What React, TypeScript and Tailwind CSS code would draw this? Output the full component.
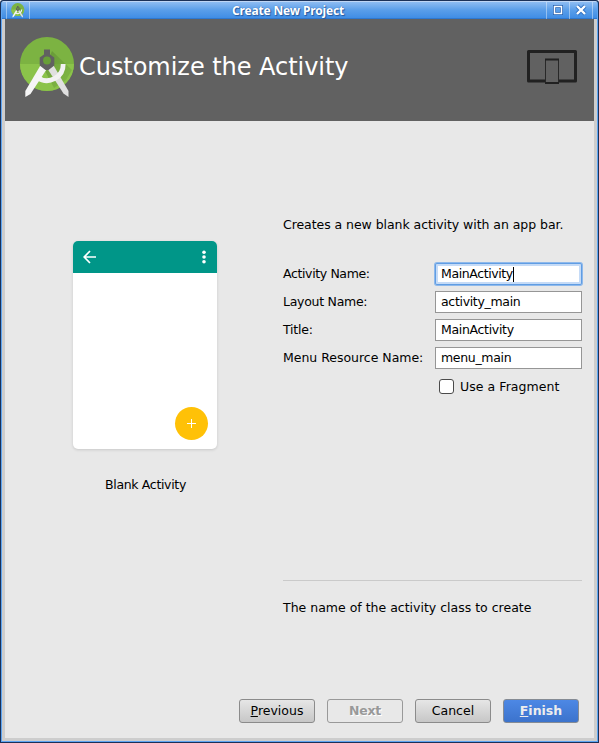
import React from "react";

function StudioLogo({ className }: { className: string }) {
  return (
    <svg className={className} viewBox="0 0 56 62">
      <defs>
        <linearGradient id="shade" x1="0" y1="0" x2="1" y2="1">
          <stop offset="0" stopColor="#57862f" />
          <stop offset="1" stopColor="#7cb342" />
        </linearGradient>
        <clipPath id="disc">
          <circle cx="27" cy="27" r="27" />
        </clipPath>
      </defs>
      <circle cx="27" cy="27" r="27" fill="#7cb342" />
      <path d="M0 27a27 27 0 0 0 54 0z" fill="#8bc34a" />
      <path d="M32 14L52 33L46 43L34 51L24 32z" fill="url(#shade)" opacity="0.6" clipPath="url(#disc)" />
      <path d="M27 31L33 27.500L48.500 54V60L43.500 56.500z" fill="#e0e0e0" />
      <path d="M17.500 40.500A16.200 16.200 0 0 0 43.200 27" fill="none" stroke="#f2f2f2" strokeWidth="4.800" />
      <path d="M21 27.500L27.500 31L10.500 57L5.300 60V54z" fill="#f5f5f5" />
      <path d="M24 12.500h6v5l4.300 3v8L28.500 33h-3L19.700 28.500v-8l4.300-3z" fill="#616161" />
      <circle cx="27" cy="23.500" r="3.900" fill="#689f38" />
    </svg>
  );
}

function Separator() {
  return <i className="h-[17px] w-px bg-white/40" />;
}

function TitleBar() {
  return (
    <header className="flex h-[18px] shrink-0 items-center border-t border-[#bfd6f5] border-b border-b-[#2f78cf] bg-gradient-to-b from-[#8dbcf2] via-[#5a9ee9] to-[#3f8de5]">
      <span className="w-[4px]" />
      <Separator />
      <div className="flex w-[22px] justify-center">
        <StudioLogo className="h-[15px] w-[14px]" />
      </div>
      <Separator />
      <h1 className="flex-1 whitespace-nowrap pt-[2px] text-center font-['Noto_Sans',sans-serif] text-[12px] leading-4 font-bold tracking-[-0.17px] text-white [text-shadow:0_0_1px_#245aa0,1px_1px_1px_#245aa0]">
        Create New Project
      </h1>
      <Separator />
      <div className="flex w-[22px] justify-center">
        <svg className="h-[12px] w-[12px]" viewBox="0 0 12 12">
          <path d="M2.500 2.500h7v7h-7z" fill="none" stroke="#245fae" strokeWidth="3" />
          <path d="M2.500 2.500h7v7h-7z" fill="none" stroke="white" strokeWidth="1.500" />
        </svg>
      </div>
      <Separator />
      <div className="flex w-[22px] justify-center">
        <svg className="h-[12px] w-[12px]" viewBox="0 0 12 12">
          <path d="M2 2l8 8M10 2l-8 8" stroke="#2f6fc0" strokeWidth="4" />
          <path d="M2 2l8 8M10 2l-8 8" stroke="white" strokeWidth="2.400" />
        </svg>
      </div>
      <Separator />
      <span className="w-[4px]" />
    </header>
  );
}

function Banner() {
  return (
    <div className="flex h-[102px] shrink-0 items-center bg-[#616161] pr-[17px] pl-[15px]">
      <StudioLogo className="mt-[-4px] h-[62px] w-[56px]" />
      <h2 className="ml-[3px] flex-1 pb-[6px] text-[24px] leading-8 tracking-[-0.04px] whitespace-nowrap text-white">
        Customize the Activity
      </h2>
      <svg className="mb-[5px] h-[35px] w-[50px]" viewBox="0 0 50 35">
        <path d="M1.500 1.500h47v29.500h-47z" fill="none" stroke="#212121" strokeWidth="3" strokeLinejoin="round" />
        <path d="M18.500 9.500h13v23h-13z" fill="#616161" stroke="#282828" />
        <path d="M18 9.500h14M18 33h14" stroke="#212121" strokeWidth="2" />
      </svg>
    </div>
  );
}

function Preview() {
  return (
    <div className="flex w-[144px] flex-col items-center">
      <div className="flex h-[208px] w-full flex-col overflow-hidden rounded-[5px] bg-white shadow-[0_1px_3px_rgba(0,0,0,0.14)]">
        <div className="flex h-8 items-center justify-between bg-[#009688] pr-[11px] pl-[10px]">
          <svg className="h-[14px] w-[14px]" viewBox="0 0 14 14" fill="none" stroke="white" strokeWidth="1.700">
            <path d="M13 7H1.500M7 1L1.200 7L7 13" />
          </svg>
          <svg className="h-[14px] w-[4px]" viewBox="0 0 4 14" fill="white">
            <circle cx="2" cy="2.300" r="1.800" />
            <circle cx="2" cy="7" r="1.800" />
            <circle cx="2" cy="11.700" r="1.800" />
          </svg>
        </div>
        <div className="flex flex-1 items-end justify-end pr-[9px] pb-[9px]">
          <div className="flex h-[33px] w-[33px] items-center justify-center rounded-full bg-[#ffc107]">
            <svg className="h-[9px] w-[9px]" viewBox="0 0 9 9" stroke="white">
              <path d="M0 4.500h9M4.500 0v9" />
            </svg>
          </div>
        </div>
      </div>
      <p className="mt-[28px] pl-px leading-4 tracking-[-0.33px]">Blank Activity</p>
    </div>
  );
}

interface FieldProps {
  label: string;
  value: string;
  labelClass?: string;
  focused?: boolean;
}

function Field({ label, value, labelClass = "", focused = false }: FieldProps) {
  return (
    <div className="flex h-[22px] items-center">
      <label className={`w-[152px] whitespace-nowrap ${labelClass}`}>{label}</label>
      <div
        className={
          focused
            ? "flex h-[22px] w-[147px] items-center rounded-[2px] border border-[#609de3] bg-white pl-[5px] tracking-[-0.4px] ring-1 ring-[#8fb9eb] inset-ring-2 inset-ring-[#c5dbf7]"
            : "flex h-[22px] w-[147px] items-center border border-[#969696] bg-white pl-[5px] tracking-[-0.32px]"
        }
      >
        {value}
        {focused && <i className="h-[15px] w-px bg-black" />}
      </div>
    </div>
  );
}

function PushButton({ children, className = "" }: { children: React.ReactNode; className?: string }) {
  return (
    <button className={`h-[24px] w-[76px] rounded-[3px] border pb-px leading-[21px] ${className}`}>{children}</button>
  );
}

const raised = "border-[#8b8b8b] bg-gradient-to-b from-[#e6e6e6] to-[#c7c7c7]";

export default function App() {
  return (
    <div className="h-[743px] w-[599px] rounded-t-[3px] bg-[#1b3158] p-px font-['DejaVu_Sans',sans-serif] text-[12.500px] text-black">
      <div className="flex h-full flex-col overflow-hidden rounded-t-[3px] border-x border-b border-[#5ea5f2] bg-[#cdcdcd]">
        <TitleBar />
        <main className="mx-[3px] mb-[3px] flex flex-1 flex-col bg-[#e8e8e8]">
          <Banner />
          <div className="flex flex-1 pl-[68px]">
            <div className="pt-[120px]">
              <Preview />
            </div>
            <section className="ml-[66px] flex w-[299px] flex-col pt-[96px]">
              <p className="leading-4 tracking-[-0.055px] whitespace-nowrap">Creates a new blank activity with an app bar.</p>
              <form className="mt-[30px] flex flex-col gap-[6px]">
                <Field label="Activity Name:" value="MainActivity" labelClass="tracking-[-0.37px]" focused />
                <Field label="Layout Name:" value="activity_main" labelClass="tracking-[-0.27px]" />
                <Field label="Title:" value="MainActivity" labelClass="tracking-[-0.2px]" />
                <Field label="Menu Resource Name:" value="menu_main" labelClass="tracking-[-0.02px]" />
                <div className="flex h-[22px] items-center pl-[156px]">
                  <i className="h-[15px] w-[15px] rounded-[3px] border border-[#4a4a4a] bg-white" />
                  <span className="ml-[6px] pt-[2px] tracking-[0.06px]">Use a Fragment</span>
                </div>
              </form>
              <hr className="mt-[183px] border-[#cacaca]" />
              <p className="mt-[19px] leading-4 whitespace-nowrap">The name of the activity class to create</p>
            </section>
          </div>
          <footer className="flex justify-end gap-[12px] pr-[15px] pb-[15px]">
            <PushButton className={raised}>
              <u>P</u>revious
            </PushButton>
            <PushButton className="border-[#999] font-bold tracking-[-0.2px] text-[#999] [text-shadow:1px_1px_0_white]">
              Next
            </PushButton>
            <PushButton className={raised}>Cancel</PushButton>
            <PushButton className="border-[#858b94] bg-gradient-to-b from-[#4d88e5] to-[#3c73cc] font-bold text-[#ededed]">
              <u>F</u>inish
            </PushButton>
          </footer>
        </main>
      </div>
    </div>
  );
}
